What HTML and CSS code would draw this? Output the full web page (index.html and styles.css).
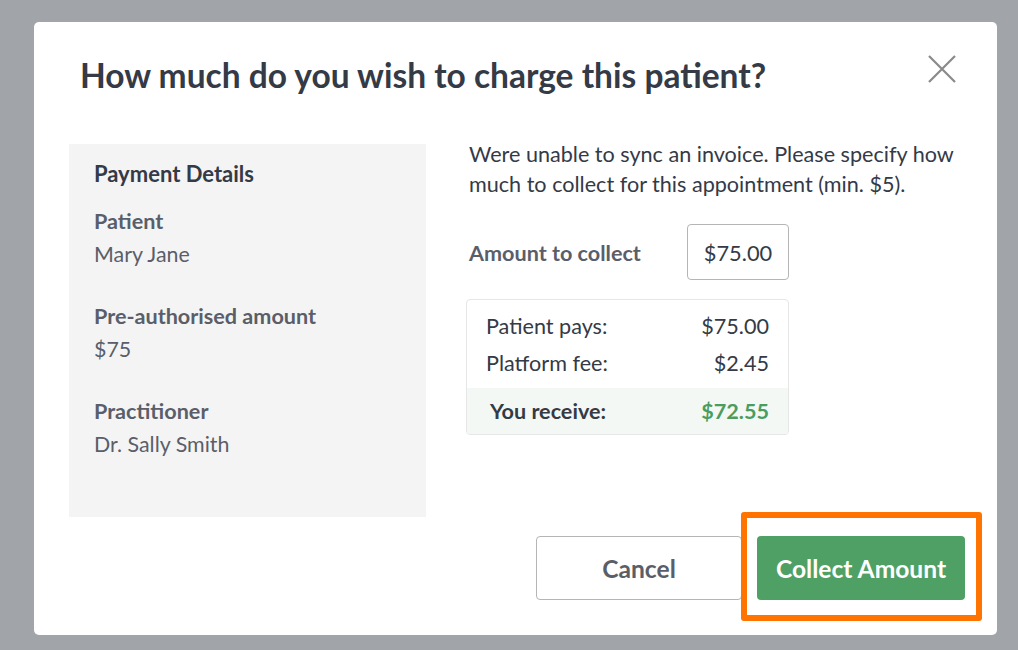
FILE: index.html
```html
<!DOCTYPE html>
<html>
<head>
<meta charset="utf-8">
<link rel="stylesheet" href="styles.css">
</head>
<body>
<div class="modal">
  <div class="header">
    <h1 class="title">How much do you wish to charge this patient?</h1>
    <button class="close" aria-label="Close">
      <svg width="28" height="28" viewBox="0 0 28 28"><path d="M1 1 L27 27 M27 1 L1 27" stroke="#8a8a8a" stroke-width="2.2" fill="none"/></svg>
    </button>
  </div>
  <div class="body">
    <div class="details">
      <div class="details-title">Payment Details</div>
      <div class="field">
        <div class="field-label">Patient</div>
        <div class="field-value">Mary Jane</div>
      </div>
      <div class="field">
        <div class="field-label">Pre-authorised amount</div>
        <div class="field-value">$75</div>
      </div>
      <div class="field">
        <div class="field-label">Practitioner</div>
        <div class="field-value">Dr. Sally Smith</div>
      </div>
    </div>
    <div class="main">
      <p class="intro">Were unable to sync an invoice. Please specify how much to collect for this appointment (min. $5).</p>
      <div class="amount-row">
        <span class="amount-label">Amount to collect</span>
        <div class="amount-input">$75.00</div>
      </div>
      <div class="summary">
        <div class="sum-row"><span>Patient pays:</span><span>$75.00</span></div>
        <div class="sum-row"><span>Platform fee:</span><span>$2.45</span></div>
        <div class="sum-row total"><span class="total-label">You receive:</span><span class="total-value">$72.55</span></div>
      </div>
    </div>
  </div>
  <div class="footer">
    <button class="btn btn-cancel">Cancel</button>
    <div class="primary-wrap">
      <button class="btn btn-primary">Collect Amount</button>
      <div class="highlight"></div>
    </div>
  </div>
</div>
</body>
</html>
```
FILE: styles.css
```css
* { box-sizing: border-box; }
html, body { margin: 0; padding: 0; }
body {
  background: #a1a4a9;
  width: 1018px;
  height: 650px;
  font-family: Lato, "Noto Sans", sans-serif;
  padding: 22px 21px 0 34px;
  overflow: hidden;
}
.modal {
  background: #fff;
  border-radius: 5px;
  width: 963px;
  height: 613px;
  padding: 0 32px 0 35px;
  display: flex;
  flex-direction: column;
}
.header {
  display: flex;
  justify-content: space-between;
  align-items: flex-start;
  padding: 33px 9px 0 11px;
  height: 106px;
}
.title {
  margin: 0;
  font-size: 33.5px;
  font-weight: 700;
  color: #343a46;
  line-height: 40px;
}
.close {
  background: none;
  border: 0;
  padding: 0;
  width: 28px;
  height: 28px;
  cursor: pointer;
}
.close svg { display: block; }
.body {
  display: flex;
  gap: 40px;
  margin-top: 16px;
}
.details {
  width: 357px;
  height: 373px;
  background: #f4f4f4;
  padding: 16px 25px;
}
.details-title {
  font-size: 22px;
  font-weight: 700;
  color: #343a46;
  line-height: 28px;
  margin-bottom: 17px;
}
.field { margin-bottom: 30px; }
.field-label {
  font-size: 21.6px;
  font-weight: 700;
  color: #5a5e69;
  line-height: 33px;
}
.field-value {
  font-size: 21.4px;
  color: #5a5e69;
  line-height: 32px;
}
.main { flex: 1; }
.intro {
  margin: -5px 0 0 3px;
  font-size: 21.6px;
  line-height: 30px;
  color: #343a46;
}
.amount-row {
  display: flex;
  align-items: center;
  margin-top: 25px;
  margin-left: 3px;
}
.amount-label {
  font-size: 21.6px;
  font-weight: 700;
  color: #5a5e69;
  width: 218px;
  padding-top: 2px;
}
.amount-input {
  width: 102px;
  height: 56px;
  border: 1px solid #b5b5b5;
  border-radius: 4px;
  display: flex;
  align-items: center;
  justify-content: center;
  font-size: 21.8px;
  color: #343a46;
}
.summary {
  margin-top: 19px;
  width: 323px;
  border: 1px solid #e6e6e6;
  border-radius: 4px;
  overflow: hidden;
  padding-top: 8px;
}
.sum-row {
  display: flex;
  justify-content: space-between;
  padding: 0 19px;
  font-size: 21.6px;
  color: #343a46;
  line-height: 37px;
}
.sum-row.total {
  background: #f3f8f4;
  margin-top: 6px;
  line-height: 46px;
  font-weight: 700;
}
.total-label { padding-left: 4px; }
.total-value { color: #4a9d5f; }
.footer {
  display: flex;
  justify-content: flex-end;
  gap: 15px;
  margin-top: 19px;
}
.btn {
  height: 64px;
  border-radius: 4px;
  font-family: Lato, "Noto Sans", sans-serif;
  font-size: 24.6px;
  font-weight: 700;
  cursor: pointer;
}
.btn-cancel {
  width: 206px;
  background: #fff;
  border: 1px solid #b5b5b5;
  color: #5a5e69;
}
.primary-wrap { position: relative; }
.btn-primary {
  width: 208px;
  background: #4fa065;
  border: 0;
  color: #fff;
}
.highlight {
  position: absolute;
  left: -16px;
  top: -24px;
  width: 241px;
  height: 109px;
  border: 6px solid #ff7300;
  border-radius: 3px;
  pointer-events: none;
}
```
